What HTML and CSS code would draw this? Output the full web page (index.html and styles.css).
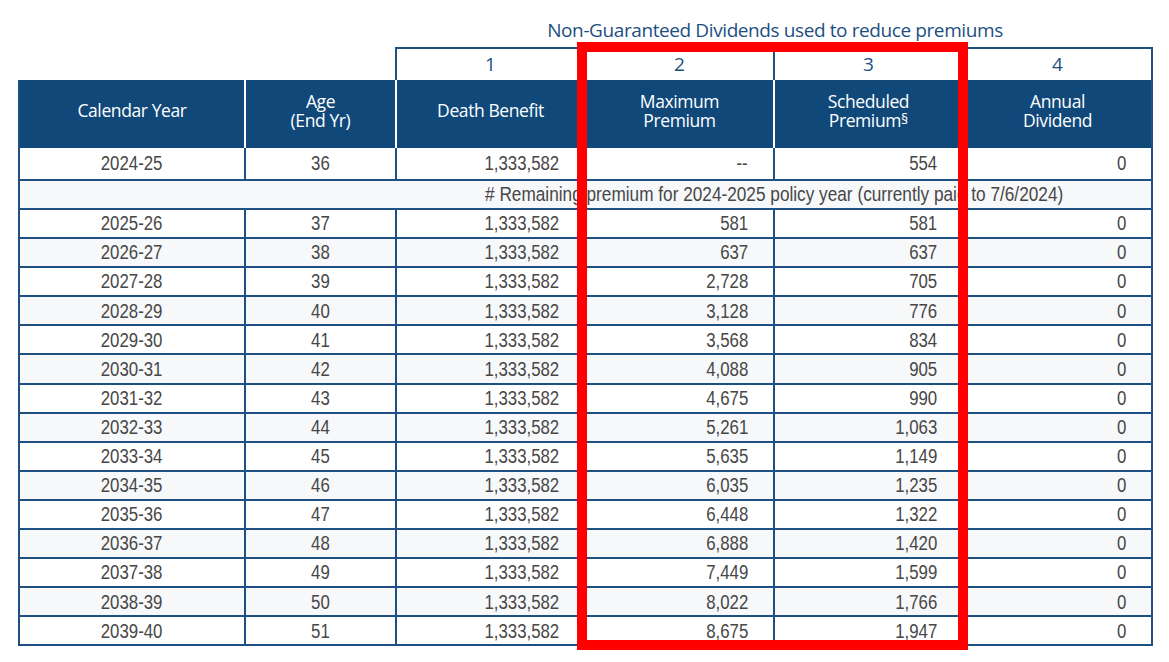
FILE: index.html
```html
<!DOCTYPE html>
<html lang="en">
<head>
<meta charset="utf-8">
<title>Illustration</title>
<link rel="stylesheet" href="styles.css">
</head>
<body>
<div class="page">
<table class="illus">
  <colgroup>
    <col class="c-year"><col class="c-age"><col class="c-num"><col class="c-num"><col class="c-num"><col class="c-num">
  </colgroup>
  <thead>
    <tr class="ttl"><th colspan="2" class="empty"></th><th colspan="4" class="title">Non-Guaranteed Dividends used to reduce premiums</th></tr>
    <tr class="idx"><th colspan="2" class="blank"></th><th>1</th><th>2</th><th>3</th><th>4</th></tr>
    <tr class="hdr">
      <th>Calendar Year</th>
      <th>Age<br>(End Yr)</th>
      <th>Death Benefit</th>
      <th>Maximum<br>Premium</th>
      <th>Scheduled<br>Premium<sup>§</sup></th>
      <th>Annual<br>Dividend</th>
    </tr>
  </thead>
  <tbody>
    <tr class="first"><td><span class="t">2024-25</span></td><td><span class="t">36</span></td><td class="n"><span class="t">1,333,582</span></td><td class="n"><span class="t">--</span></td><td class="n"><span class="t">554</span></td><td class="n"><span class="t">0</span></td></tr>
    <tr class="note"><td colspan="6"><span class="t"># Remaining premium for 2024-2025 policy year (currently paid to 7/6/2024)</span></td></tr>
    <tr><td><span class="t">2025-26</span></td><td><span class="t">37</span></td><td class="n"><span class="t">1,333,582</span></td><td class="n"><span class="t">581</span></td><td class="n"><span class="t">581</span></td><td class="n"><span class="t">0</span></td></tr>
    <tr class="alt"><td><span class="t">2026-27</span></td><td><span class="t">38</span></td><td class="n"><span class="t">1,333,582</span></td><td class="n"><span class="t">637</span></td><td class="n"><span class="t">637</span></td><td class="n"><span class="t">0</span></td></tr>
    <tr><td><span class="t">2027-28</span></td><td><span class="t">39</span></td><td class="n"><span class="t">1,333,582</span></td><td class="n"><span class="t">2,728</span></td><td class="n"><span class="t">705</span></td><td class="n"><span class="t">0</span></td></tr>
    <tr class="alt"><td><span class="t">2028-29</span></td><td><span class="t">40</span></td><td class="n"><span class="t">1,333,582</span></td><td class="n"><span class="t">3,128</span></td><td class="n"><span class="t">776</span></td><td class="n"><span class="t">0</span></td></tr>
    <tr><td><span class="t">2029-30</span></td><td><span class="t">41</span></td><td class="n"><span class="t">1,333,582</span></td><td class="n"><span class="t">3,568</span></td><td class="n"><span class="t">834</span></td><td class="n"><span class="t">0</span></td></tr>
    <tr class="alt"><td><span class="t">2030-31</span></td><td><span class="t">42</span></td><td class="n"><span class="t">1,333,582</span></td><td class="n"><span class="t">4,088</span></td><td class="n"><span class="t">905</span></td><td class="n"><span class="t">0</span></td></tr>
    <tr><td><span class="t">2031-32</span></td><td><span class="t">43</span></td><td class="n"><span class="t">1,333,582</span></td><td class="n"><span class="t">4,675</span></td><td class="n"><span class="t">990</span></td><td class="n"><span class="t">0</span></td></tr>
    <tr class="alt"><td><span class="t">2032-33</span></td><td><span class="t">44</span></td><td class="n"><span class="t">1,333,582</span></td><td class="n"><span class="t">5,261</span></td><td class="n"><span class="t">1,063</span></td><td class="n"><span class="t">0</span></td></tr>
    <tr><td><span class="t">2033-34</span></td><td><span class="t">45</span></td><td class="n"><span class="t">1,333,582</span></td><td class="n"><span class="t">5,635</span></td><td class="n"><span class="t">1,149</span></td><td class="n"><span class="t">0</span></td></tr>
    <tr class="alt"><td><span class="t">2034-35</span></td><td><span class="t">46</span></td><td class="n"><span class="t">1,333,582</span></td><td class="n"><span class="t">6,035</span></td><td class="n"><span class="t">1,235</span></td><td class="n"><span class="t">0</span></td></tr>
    <tr><td><span class="t">2035-36</span></td><td><span class="t">47</span></td><td class="n"><span class="t">1,333,582</span></td><td class="n"><span class="t">6,448</span></td><td class="n"><span class="t">1,322</span></td><td class="n"><span class="t">0</span></td></tr>
    <tr class="alt"><td><span class="t">2036-37</span></td><td><span class="t">48</span></td><td class="n"><span class="t">1,333,582</span></td><td class="n"><span class="t">6,888</span></td><td class="n"><span class="t">1,420</span></td><td class="n"><span class="t">0</span></td></tr>
    <tr><td><span class="t">2037-38</span></td><td><span class="t">49</span></td><td class="n"><span class="t">1,333,582</span></td><td class="n"><span class="t">7,449</span></td><td class="n"><span class="t">1,599</span></td><td class="n"><span class="t">0</span></td></tr>
    <tr class="alt"><td><span class="t">2038-39</span></td><td><span class="t">50</span></td><td class="n"><span class="t">1,333,582</span></td><td class="n"><span class="t">8,022</span></td><td class="n"><span class="t">1,766</span></td><td class="n"><span class="t">0</span></td></tr>
    <tr><td><span class="t">2039-40</span></td><td><span class="t">51</span></td><td class="n"><span class="t">1,333,582</span></td><td class="n"><span class="t">8,675</span></td><td class="n"><span class="t">1,947</span></td><td class="n"><span class="t">0</span></td></tr>
  </tbody>
</table>
<div class="highlight"></div>
</div>
</body>
</html>
```
FILE: styles.css
```css
html, body {
  margin: 0;
  padding: 0;
  background: #ffffff;
}

.page {
  position: relative;
  width: 1169px;
  height: 662px;
  overflow: hidden;
}

.illus {
  margin: 15px 0 0 18px;
  border-collapse: separate;
  border-spacing: 0;
  table-layout: fixed;
  width: 1134px;
  font-family: "Liberation Sans", Arial, sans-serif;
  font-size: 20.5px;
  color: #474747;
}

.c-year { width: 228px; }
.c-age { width: 151px; }
.c-num { width: 189px; }

.illus th,
.illus td {
  padding: 0;
  font-weight: normal;
}

/* condensed figures, as in the printed illustration */
.t {
  display: inline-block;
  transform: scaleX(0.82);
  transform-origin: center;
  white-space: nowrap;
}
.illus td.n .t {
  transform-origin: right center;
}
.illus tr.note .t {
  transform: scaleX(0.84);
}

/* title row */
.ttl th {
  height: 32px;
  vertical-align: middle;
}
.ttl .title {
  font-family: "Open Sans", "Noto Sans", sans-serif;
  font-size: 19px;
  letter-spacing: -0.4px;
  color: #1d4f81;
  text-align: center;
  padding-bottom: 2px;
  height: 30px;
}

/* column index row */
.idx th {
  height: 29px;
  font-family: "Open Sans", "Noto Sans", sans-serif;
  font-size: 19px;
  color: #1d4f81;
  text-align: center;
  border-top: 2px solid #1f5084;
  border-right: 2px solid #1f5084;
  padding-bottom: 2px;
}
.idx th.blank {
  border-top: none;
}

/* blue header */
.hdr th {
  height: 61px;
  padding-bottom: 7px;
  background: #10487a;
  color: #ffffff;
  font-family: "Open Sans", "Noto Sans", sans-serif;
  font-size: 17.5px;
  letter-spacing: -0.4px;
  line-height: 19px;
  text-align: center;
  vertical-align: middle;
  border-right: 2px solid #ffffff;
}
.hdr th:first-child {
  border-left: 2px solid #1f5084;
}
.hdr th:last-child {
  border-right: 2px solid #1f5084;
}
.hdr sup {
  font-size: 14px;
  vertical-align: 3px;
  line-height: 0;
  letter-spacing: 0;
}

/* body */
.illus td {
  height: 27.1px;
  text-align: center;
  vertical-align: middle;
  line-height: 1;
  border-right: 2px solid #1f5084;
  border-bottom: 2px solid #1f5084;
  background: #ffffff;
}
.illus td:first-child {
  border-left: 2px solid #1f5084;
}
.illus td.n {
  text-align: right;
  padding-right: 25px;
}
.illus tr.alt td {
  background: #f7f8fa;
}
.illus tr.first td {
  height: 31px;
}
.illus tr.note td {
  height: 27px;
  background: #f7f8fa;
  padding-left: 378px;
}

/* red annotation box drawn over the table */
.highlight {
  position: absolute;
  left: 577px;
  top: 42px;
  width: 391px;
  height: 608px;
  box-sizing: border-box;
  border: 10px solid #ff0000;
  pointer-events: none;
}
```
